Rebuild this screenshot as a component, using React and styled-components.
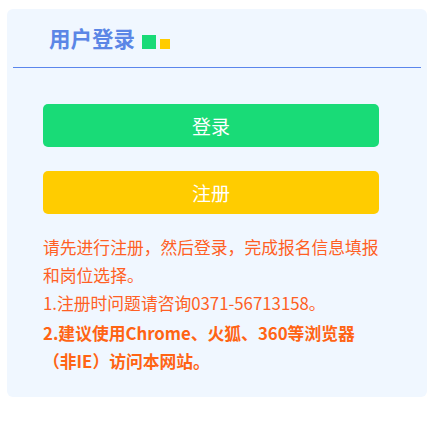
import React from 'react'
import styled, { createGlobalStyle } from 'styled-components'

const GlobalStyle = createGlobalStyle`
  body {
    margin: 0;
    background: #ffffff;
    font-family: "Noto Sans CJK SC", "Noto Sans", sans-serif;
  }
`

const Card = styled.div`
  margin: 9px 7px 0;
  width: 420px;
  box-sizing: border-box;
  background: #f0f7ff;
  border-radius: 6px;
  padding: 0 0 22px;
`

const Header = styled.div`
  margin: 0 6px;
  height: 58px;
  border-bottom: 1px solid #5b86ec;
  display: flex;
  align-items: center;
  padding-left: 36px;
`

const Title = styled.h2`
  margin: 0;
  font-size: 21.5px;
  line-height: 22px;
  font-weight: 700;
  color: #5b86e6;
`

const Marks = styled.div`
  display: flex;
  align-items: flex-end;
  gap: 4px;
  height: 22px;
  margin-left: 7px;
`

const Mark = styled.span`
  display: block;
  width: ${(p) => p.$size}px;
  height: ${(p) => p.$size}px;
  background: ${(p) => p.$color};
`

const Body = styled.div`
  padding: 36px 0 0 36px;
`

const Actions = styled.div`
  display: flex;
  flex-direction: column;
  gap: 24px;
  width: 336px;
`

const Button = styled.button`
  height: 43px;
  border: none;
  border-radius: 5px;
  background: ${(p) => p.$bg};
  color: #ffffff;
  font-family: inherit;
  font-size: 19px;
  cursor: pointer;
`

const Notes = styled.div`
  margin-top: 19px;
  width: 338px;
  font-size: 16.8px;
  line-height: 28px;
  color: #ff5f24;
`

const Note = styled.p`
  margin: 0;
  font-weight: ${(p) => (p.$strong ? 700 : 400)};
  color: ${(p) => (p.$strong ? '#ff6414' : 'inherit')};
  margin-top: ${(p) => (p.$strong ? '2px' : '0')};
`

function App() {
  return (
    <>
      <GlobalStyle />
      <Card>
        <Header>
          <Title>用户登录</Title>
          <Marks>
            <Mark $size={14} $color='#19db77' />
            <Mark $size={10} $color='#ffcc00' />
          </Marks>
        </Header>
        <Body>
          <Actions>
            <Button $bg='#19db77'>登录</Button>
            <Button $bg='#ffcc00'>注册</Button>
          </Actions>
          <Notes>
            <Note>请先进行注册，然后登录，完成报名信息填报和岗位选择。</Note>
            <Note>1.注册时问题请咨询0371-56713158。</Note>
            <Note $strong>
              2.建议使用Chrome、火狐、360等浏览器
              <br />
              （非IE）访问本网站。
            </Note>
          </Notes>
        </Body>
      </Card>
    </>
  )
}

export default App
